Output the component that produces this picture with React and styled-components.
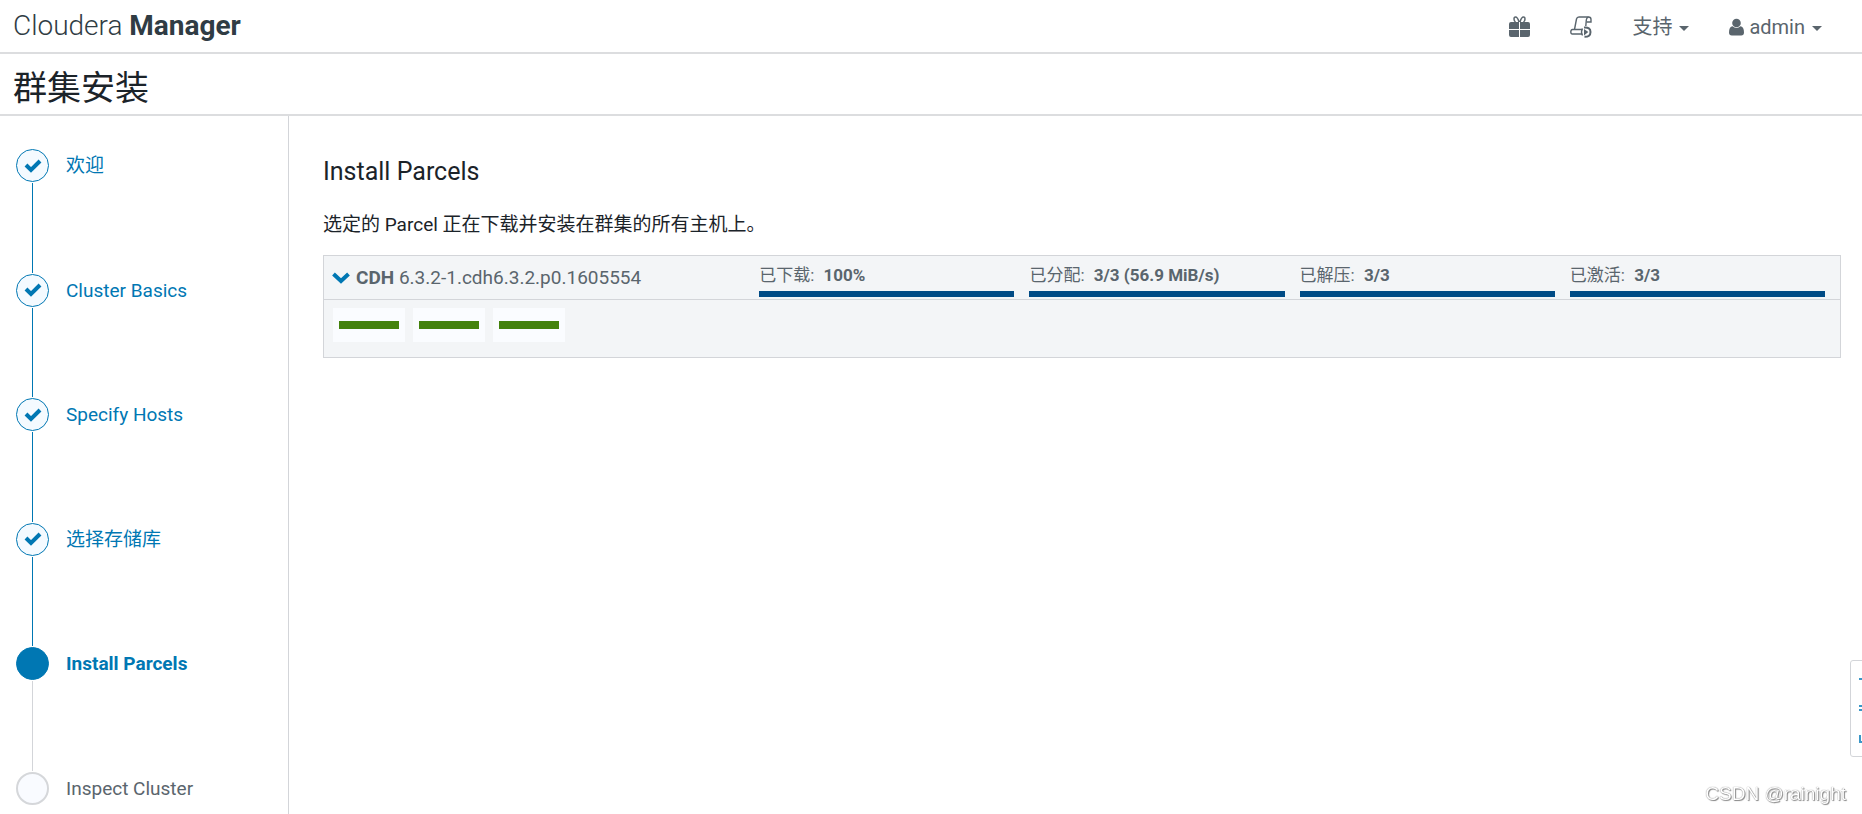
import React from "react"
import styled, { createGlobalStyle } from "styled-components"

const steps = [
  { label: "欢迎", status: "done" },
  { label: "Cluster Basics", status: "done" },
  { label: "Specify Hosts", status: "done" },
  { label: "选择存储库", status: "done" },
  { label: "Install Parcels", status: "current" },
  { label: "Inspect Cluster", status: "pending" }
]

const stages = [
  { label: "已下载", value: "100%", percent: 100 },
  { label: "已分配", value: "3/3 (56.9 MiB/s)", percent: 100 },
  { label: "已解压", value: "3/3", percent: 100 },
  { label: "已激活", value: "3/3", percent: 100 }
]

const hosts = [1, 2, 3]

const GiftIcon = () => (
  <svg width="21" height="22" viewBox="0 0 21 22" fill="currentColor">
    <path d="M2 6h8v7H0V8q0-2 2-2zM11 6h8q2 0 2 2v5H11zM0 14h10v7H2q-2 0-2-2zM11 14h10v5q0 2-2 2h-8z" />
    <path
      d="M10 6C9 2.500 7.500 1 6.500 1 4.500 1 4.500 4.500 6.500 6M11 6C12 2.500 13.500 1 14.500 1c2 0 2 3.500 0 5"
      fill="none"
      stroke="currentColor"
      strokeWidth="1.500"
    />
  </svg>
)

const CommandsIcon = () => (
  <svg width="22" height="22" viewBox="0 0 22 22" fill="none" stroke="currentColor" strokeWidth="1.400">
    <path d="M4.500 13.500L6.500 3Q7 1 9 1h9.500Q21 1 21 3.500V6h-4.500" />
    <path d="M18.500 1Q16.500 1.500 16.300 4L15.800 10" />
    <path d="M12 13.500H2.500Q.8 13.500.8 15.800t1.700 2.200H12" />
    <path d="M12.500 12.500Q10.500 16 12.500 19.500" />
    <path d="M14 11.500Q20.500 11 20.500 16T14.500 20.800" strokeWidth="2" />
    <path d="M14 13v6.400L18.300 16z" fill="currentColor" stroke="none" />
  </svg>
)

const UserIcon = () => (
  <svg width="15" height="18" viewBox="0 0 15 18" fill="currentColor">
    <circle cx="7.500" cy="5" r="4.300" />
    <path d="M3.600 8.200Q5.300 10 7.500 10t3.900-1.800Q15 8.600 15 14.500q0 3-2.800 3H2.800q-2.800 0-2.800-3 0-5.900 3.600-6.300z" />
  </svg>
)

const CheckIcon = () => (
  <svg width="18" height="14" viewBox="0 0 18 14" fill="none" stroke="currentColor" strokeWidth="4">
    <path d="M2 6l5 5 9-9" />
  </svg>
)

const ChevronIcon = () => (
  <svg width="18" height="12" viewBox="0 0 18 12" fill="none" stroke="currentColor" strokeWidth="4">
    <path d="M1.500 2L9 9l7.500-7" />
  </svg>
)

const Step = ({ label, status, last }) => (
  <StepItem $last={last}>
    <Track>
      <Circle $status={status}>{status === "done" && <CheckIcon />}</Circle>
      {!last && <Line $done={status === "done"} />}
    </Track>
    <StepLabel $status={status}>{label}</StepLabel>
  </StepItem>
)

const App = () => {
  return (
    <Page>
      <GlobalStyle />
      <Header>
        <Brand href="#">
          Cloudera <b>Manager</b>
        </Brand>
        <Nav>
          <NavButton aria-label="Parcels">
            <GiftIcon />
          </NavButton>
          <NavButton aria-label="Commands">
            <CommandsIcon />
          </NavButton>
          <NavButton>
            支持
            <Caret />
          </NavButton>
          <NavButton>
            <UserIcon />
            admin
            <Caret />
          </NavButton>
        </Nav>
      </Header>
      <TitleBar>
        <Title>群集安装</Title>
      </TitleBar>
      <Body>
        <Sidebar>
          <StepList>
            {steps.map((step, i) => (
              <Step key={step.label} {...step} last={i === steps.length - 1} />
            ))}
          </StepList>
        </Sidebar>
        <Main>
          <Heading>Install Parcels</Heading>
          <Intro>选定的 Parcel 正在下载并安装在群集的所有主机上。</Intro>
          <Parcel>
            <ParcelRow>
              <ParcelToggle aria-expanded="true">
                <ChevronIcon />
                <span>
                  <b>CDH</b> 6.3.2-1.cdh6.3.2.p0.1605554
                </span>
              </ParcelToggle>
              {stages.map(stage => (
                <Stage key={stage.label}>
                  <StageText>
                    {stage.label}: <b>{stage.value}</b>
                  </StageText>
                  <Bar>
                    <BarFill style={{ width: `${stage.percent}%` }} />
                  </Bar>
                </Stage>
              ))}
            </ParcelRow>
            <Hosts>
              {hosts.map(host => (
                <Host key={host}>
                  <HostBar />
                </Host>
              ))}
            </Hosts>
          </Parcel>
        </Main>
      </Body>
      <SidePanel>
        <svg width="20" height="80" viewBox="0 0 20 80" fill="none" stroke="#3a97c8" strokeWidth="2">
          <path d="M0 10h12M0 37h12M0 41h12M1 66v7h10" />
        </svg>
      </SidePanel>
      <Watermark>CSDN @rainight</Watermark>
    </Page>
  )
}

/**********BEGIN STYLING**********/
const GlobalStyle = createGlobalStyle`
  * {
    box-sizing: border-box;
  }
  body {
    margin: 0;
    overflow: hidden;
    background-color: #fff;
    color: #1b2329;
    font-family: Roboto, "Noto Sans CJK SC", sans-serif;
    font-size: 19px;
    line-height: 28px;
  }
  button {
    padding: 0;
    border: 0;
    background: none;
    color: inherit;
    font: inherit;
    cursor: pointer;
  }
`
const Page = styled.div`
  display: flex;
  flex-direction: column;
  min-height: 100vh;
`
const Header = styled.header`
  display: flex;
  justify-content: space-between;
  align-items: center;
  height: 54px;
  padding: 0 40px 0 13px;
  border-bottom: 2px solid #dcdddf;
`
const Brand = styled.a`
  color: #303c44;
  font-size: 28px;
  font-weight: 300;
  text-decoration: none;
  b {
    font-weight: 700;
  }
`
const Nav = styled.nav`
  display: flex;
  gap: 40px;
  padding-top: 1px;
  color: #5a656d;
`
const NavButton = styled.button`
  display: flex;
  align-items: center;
  gap: 5px;
  font-size: 20px;
`
const Caret = styled.span`
  margin: 3px 0 0 2px;
  border: 5px solid transparent;
  border-top-color: currentColor;
  border-bottom: 0;
`
const TitleBar = styled.div`
  height: 62px;
  padding: 0 13px;
  border-bottom: 2px solid #dcdddf;
`
const Title = styled.h1`
  margin: 0;
  font-size: 34px;
  font-weight: 400;
  line-height: 68px;
`
const Body = styled.div`
  display: flex;
  flex: 1;
`
const Sidebar = styled.aside`
  flex: none;
  width: 289px;
  padding: 33px 16px 0;
  border-right: 1px solid #d3d5d9;
`
const StepList = styled.ol`
  display: flex;
  flex-direction: column;
  min-height: 656px;
  margin: 0;
  padding: 0;
  list-style: none;
`
const StepItem = styled.li`
  display: flex;
  flex: ${props => (props.$last ? "none" : 1)};
  gap: 17px;
`
const Track = styled.div`
  display: flex;
  flex: none;
  flex-direction: column;
  align-items: center;
`
const circleColors = {
  done: { border: "1px solid #0077b3", background: "#f4faff" },
  current: { border: "1px solid #0077b3", background: "#0077b3" },
  pending: { border: "2px solid #d5d7da", background: "#f9fbff" }
}
const Circle = styled.span`
  display: flex;
  justify-content: center;
  align-items: center;
  width: 33px;
  height: 33px;
  border: ${props => circleColors[props.$status].border};
  border-radius: 50%;
  background-color: ${props => circleColors[props.$status].background};
  color: #0077b3;
`
const Line = styled.span`
  flex: 1;
  width: 1px;
  margin: 1px 0;
  background-color: ${props => (props.$done ? "#0077b3" : "#d3d5d9")};
`
const StepLabel = styled.span`
  line-height: 33px;
  color: ${props => (props.$status === "pending" ? "#5a656d" : "#0077b3")};
  font-weight: ${props => (props.$status === "current" ? 700 : 400)};
`
const Main = styled.main`
  flex: 1;
  padding: 40px 21px 0 34px;
`
const Heading = styled.h2`
  margin: 0 0 23px;
  font-size: 25px;
  font-weight: 400;
  line-height: 32px;
`
const Intro = styled.p`
  margin: 0 0 16px;
`
const Parcel = styled.section`
  border: 1px solid #d3d5d9;
  background-color: #f3f5f7;
  color: #5a656d;
`
const ParcelRow = styled.div`
  display: grid;
  grid-template-columns: 21fr repeat(4, 13fr);
  column-gap: 15px;
  height: 44px;
  padding: 0 15px 0 8px;
  border-bottom: 1px solid #d3d5d9;
`
const ParcelToggle = styled.button`
  display: flex;
  align-items: center;
  gap: 6px;
  white-space: nowrap;
  svg {
    color: #0077b3;
  }
`
const Stage = styled.div`
  padding-top: 7px;
`
const StageText = styled.div`
  font-size: 17px;
  line-height: 24px;
  white-space: nowrap;
  b {
    margin-left: 5px;
  }
`
const Bar = styled.div`
  margin-top: 4px;
  background-color: #fff;
`
const BarFill = styled.div`
  height: 6px;
  background-color: #004b85;
`
const Hosts = styled.div`
  display: flex;
  gap: 8px;
  padding: 8px 9px 15px;
`
const Host = styled.div`
  width: 72px;
  height: 34px;
  padding: 13px 6px;
  background-color: #fafcff;
`
const HostBar = styled.div`
  height: 8px;
  background-color: #43820d;
`
const SidePanel = styled.div`
  position: fixed;
  right: -20px;
  bottom: 57px;
  width: 32px;
  height: 97px;
  padding: 8px;
  border: 1px solid #d3d5d9;
  border-radius: 3px;
  background-color: #fff;
`
const Watermark = styled.div`
  position: fixed;
  right: 16px;
  bottom: 6px;
  color: #fff;
  font-family: "Liberation Sans", sans-serif;
  text-shadow: 0 0 1px #666, 1px 1px 1px #888;
`
/**********END STYLING**********/

export default App
